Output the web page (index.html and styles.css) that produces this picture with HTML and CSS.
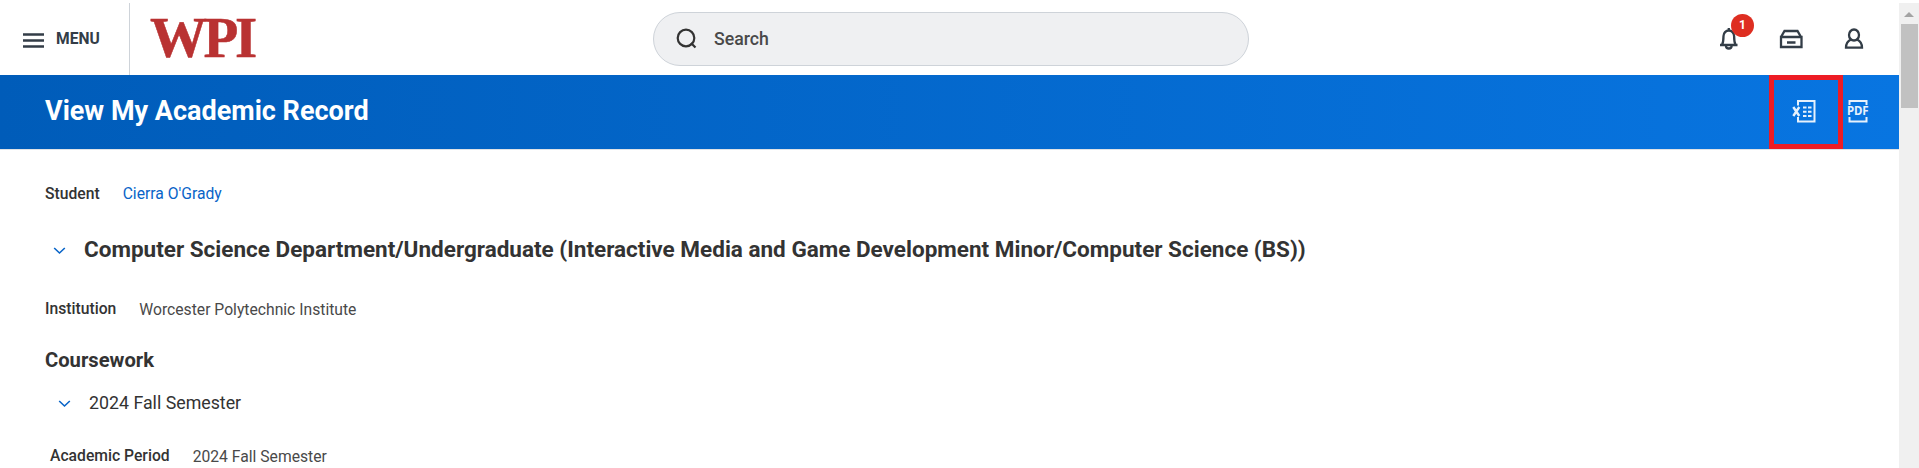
FILE: index.html
```html
<!DOCTYPE html>
<html lang="en">
<head>
<meta charset="utf-8">
<title>View My Academic Record</title>
<link rel="stylesheet" href="styles.css">
</head>
<body>
<div class="app">
  <div class="page">
    <header class="topbar">
      <button class="menu">
        <svg width="21" height="15" viewBox="0 0 21 15"><path d="M0 1.500h21M0 7.500h21M0 13.500h21" stroke="#333d47" stroke-width="2.300"/></svg>
        <span class="menu-label">MENU</span>
      </button>
      <div class="brand"><svg width="110" height="68" viewBox="0 0 110 68"><text class="logo" x="0 53.500 85" y="54">WPI</text></svg></div>
      <div class="search">
        <svg width="22" height="22" viewBox="0 0 22 22" fill="none" stroke="#333" stroke-width="2.200"><circle cx="10" cy="10" r="8.300"/><path d="M15 15l4.500 4.500"/></svg>
        <span class="search-label">Search</span>
      </div>
      <nav class="actions">
        <span class="bell">
          <svg width="20" height="24" viewBox="0 0 20 24" fill="none" stroke="#333d47" stroke-width="2.300"><path d="M1 18h17.500M3 18c1-2 1.500-4 1.500-9a5.300 5.500 0 0 1 10.600 0c0 5 .5 7 1.500 9"/><path d="M9.800 1v3M7 19a2.800 2.500 0 0 0 5.600 0"/></svg>
          <span class="badge">1</span>
        </span>
        <svg class="tray" width="24" height="20" viewBox="0 0 24 20" fill="none" stroke="#333d47" stroke-width="2.300"><path d="M2 8L5.500 2h13L22 8M2 8h20.500v10H2zM8 13.500h8.500"/></svg>
        <svg class="user" width="20" height="22" viewBox="0 0 20 22" fill="none" stroke="#333d47" stroke-width="2.300"><ellipse cx="10" cy="7" rx="5" ry="5.500"/><path d="M7 11.500C3.500 13 2 15.500 2 19.700h16c0-4.200-1.500-6.700-5-8.200"/></svg>
      </nav>
    </header>
    <div class="titlebar">
      <h1 class="title">View My Academic Record</h1>
      <div class="export">
        <span class="excel"><svg width="24" height="24" viewBox="0 0 24 24" fill="none" stroke="#e6f1fc" stroke-width="2"><path d="M6 6.500V2h16.500v20.500H6V18"/><path d="M1.300 8l6 9M7.300 8l-6 9" stroke-width="2.400"/><path d="M11 8.500h3.500M16 8.500h3.500M11 12.800h3.500M16 12.800h3.500M11 17h3.500M16 17h3.500"/></svg></span>
        <svg class="pdf" width="24" height="24" viewBox="0 0 24 24"><path d="M3.500 6V2h17v4M3.500 18v4.500h17V18" fill="none" stroke="#e6f1fc" stroke-width="2"/><text class="pdf-text" x="1" y="16.300" textLength="21.500">PDF</text></svg>
      </div>
    </div>
    <main class="content">
      <div class="field student"><span class="label">Student</span><a class="link">Cierra O'Grady</a></div>
      <div class="section"><svg width="13" height="8" viewBox="0 0 13 8"><path d="M1.200 1l5.300 5 5.300-5" fill="none" stroke="#0864c8" stroke-width="1.600"/></svg><h2 class="program">Computer Science Department/Undergraduate (Interactive Media and Game Development Minor/Computer Science (BS))</h2></div>
      <div class="field institution"><span class="label">Institution</span><span class="value">Worcester Polytechnic Institute</span></div>
      <h3 class="coursework">Coursework</h3>
      <div class="section term"><svg width="13" height="8" viewBox="0 0 13 8"><path d="M1.200 1l5.300 5 5.300-5" fill="none" stroke="#0864c8" stroke-width="1.600"/></svg><h4 class="term-name">2024 Fall Semester</h4></div>
      <div class="field period"><span class="label">Academic Period</span><span class="value">2024 Fall Semester</span></div>
    </main>
  </div>
  <div class="scrollbar"><svg width="10" height="5" viewBox="0 0 10 5"><path d="M0 5l5-5 5 5z" fill="#a3a3a3"/></svg><div class="thumb"></div></div>
</div>
</body>
</html>
```
FILE: styles.css
```css
* { box-sizing: border-box; }
body { margin: 0; font-family: Roboto, sans-serif; color: #333; background: #fff; }
h1, h2, h3, h4 { margin: 0; white-space: nowrap; }
svg { display: block; flex: none; overflow: visible; }
.app { display: flex; height: 468px; overflow: hidden; }
.page { flex: 1; min-width: 0; }
.topbar { display: flex; height: 75px; padding-top: 3px; align-items: flex-start; }
.menu { display: flex; align-items: center; gap: 12px; width: 130px; height: 72px; padding: 0 0 0 23px; border: 0; border-right: 1px solid #ced3d9; background: none; font-family: inherit; }
.menu-label { font-size: 15.6px; line-height: 20px; font-weight: 700; color: #333d47; }
.menu svg { margin-top: 2px; }
.brand { width: 110px; margin: 0 393px 0 20px; }
.logo { font-family: "Liberation Serif", serif; font-weight: 700; font-size: 57px; fill: #b93232; stroke: #b93232; stroke-width: .5; }
.search { display: flex; align-items: center; gap: 16px; width: 596px; height: 54px; margin-top: 9px; padding-left: 22px; border: 1px solid #ced3d9; border-radius: 27px; background: #eff0f2; }
.search-label { font-size: 17.7px; line-height: 22px; font-weight: 500; color: #494949; }
.search svg { margin-top: -1px; }
.actions { display: flex; align-items: flex-start; flex: 1; padding-left: 470px; }
.bell { position: relative; margin-top: 24px; }
.badge { position: absolute; left: 12px; top: -13px; width: 23px; height: 23px; border-radius: 50%; background: #de2e21; color: #fff; font-size: 12px; font-weight: 700; line-height: 23px; text-align: center; }
.tray { margin: 26px 0 0 40px; }
.user { margin: 25px 0 0 41px; }
.titlebar { display: flex; justify-content: space-between; height: 74px; padding-left: 45px; background: linear-gradient(to right, #005cb9, #0875e1); box-shadow: 0 1px 0 #dfe2e6; }
.title { font-size: 27px; line-height: 72px; font-weight: 700; color: #fff; }
.export { display: flex; width: 130px; }
.excel { width: 74px; height: 74px; padding: 19px 0 0 18px; border: 5px solid #ed1c24; }
.pdf { margin: 24px 0 0 3px; }
.pdf-text { font-family: "Noto Sans", sans-serif; font-weight: 700; font-size: 11.5px; fill: #e6f1fc; }
.content { padding-left: 45px; }
.field { display: flex; gap: 23px; font-size: 15.7px; line-height: 20px; }
.label { font-weight: 500; }
.link { color: #0864c8; }
.value { color: #494949; margin-top: 1px; }
.student { height: 55px; padding-top: 35px; }
.section { display: flex; align-items: center; gap: 18px; height: 30px; padding-left: 8px; margin-top: 30px; }
.section svg { margin-top: 3px; }
.program { font-size: 22.5px; line-height: 30px; font-weight: 700; }
.institution { height: 20px; margin-top: 35px; }
.coursework { font-size: 20.2px; line-height: 26px; margin-top: 28px; }
.term { height: 24px; padding-left: 13px; margin-top: 18px; }
.term svg { margin-top: 1px; }
.term-name { font-size: 17.8px; line-height: 24px; font-weight: 400; }
.period { padding-left: 5px; margin-top: 31px; }
.scrollbar { display: flex; flex-direction: column; align-items: center; width: 20px; margin-top: 3px; padding-top: 9px; background: #f0f0f0; }
.thumb { width: 17px; height: 84px; margin-top: 7px; background: #c1c1c1; }
```
